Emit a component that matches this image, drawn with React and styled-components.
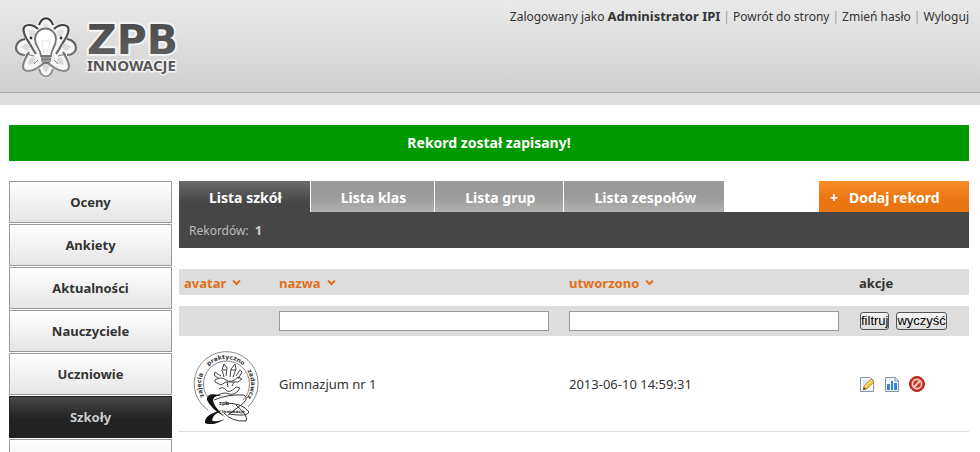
import React from "react";
import styled, { createGlobalStyle, css } from "styled-components";

const GlobalStyle = createGlobalStyle`
  * { box-sizing: border-box; }
  body {
    margin: 0;
    background: #fff;
    color: #333;
    font-family: "Lucida Grande", "Noto Sans", sans-serif;
    font-size: 13px;
    line-height: 16px;
  }
  a { color: inherit; text-decoration: none; }
`;

const Page = styled.div`
  height: 100vh;
  overflow: hidden;
`;

const Header = styled.header`
  display: flex;
  justify-content: space-between;
  align-items: flex-start;
  height: 105px;
  padding: 8px 11px 0 8px;
  background: linear-gradient(#e9e9e9, #d0d0d0 92px, #aaa 92px, #aaa 93px, #ddd 93px);
`;

const UserNav = styled.nav`
  font-size: 12px;
  color: #333;
  white-space: nowrap;
  strong { font-size: 13px; }
`;

const Divider = styled.span`
  margin: 0 3px;
  color: #999;
`;

const Notice = styled.div`
  margin: 20px 11px 20px 9px;
  padding: 10px;
  background: #090;
  color: #fff;
  font-size: 14px;
  font-weight: bold;
  text-align: center;
`;

const Body = styled.div`
  display: grid;
  grid-template-columns: 163px minmax(0, 1fr);
  gap: 7px;
  align-items: start;
  padding: 0 11px 0 9px;
`;

const Sidebar = styled.nav`
  display: flex;
  flex-direction: column;
  gap: 1px;
`;

const SideLink = styled.a`
  display: flex;
  align-items: center;
  justify-content: center;
  height: 42px;
  border: 1px solid #999;
  background: linear-gradient(#fff, #e5e5e5);
  font-weight: bold;
  ${({ $active }) => $active && css`
    border-color: #222;
    background: linear-gradient(#484848, #222 55%);
    color: #ccc;
  `}
`;

const Main = styled.main`
  min-width: 0;
`;

const Toolbar = styled.div`
  display: flex;
  justify-content: space-between;
`;

const Tabs = styled.nav`
  display: flex;
  gap: 1px;
`;

const Tab = styled.a`
  height: 31px;
  padding: 9px 28px 0 30px;
  background: ${({ $active }) =>
    $active ? "linear-gradient(#6a6a6a, #464646 70%)" : "linear-gradient(#999, #9c9c9c 55%, #b2b2b2)"};
  color: #fff;
  font-size: 14px;
  font-weight: bold;
  white-space: nowrap;
`;

const AddButton = styled.button`
  display: flex;
  align-items: center;
  gap: 11px;
  width: 150px;
  height: 31px;
  padding: 1px 0 0 11px;
  border: 0;
  background: linear-gradient(#fa9026, #ec7815 50%, #e8730f);
  color: #fff;
  font: bold 14px "Lucida Grande", "Noto Sans", sans-serif;
`;

const Summary = styled.div`
  padding: 10px;
  height: 36px;
  margin-bottom: 21px;
  background: #464646;
  color: #bbb;
  font-size: 12px;
  strong { margin-left: 3px; font-size: 13px; color: #ccc; }
`;

const Table = styled.table`
  width: 100%;
  table-layout: fixed;
  border-spacing: 0;
`;

const AvatarCol = styled.col`width: 95px;`;
const ActionCol = styled.col`width: 115px;`;

const HeadCell = styled.th`
  height: 26px;
  padding: 1px 5px 0;
  background: #ddd;
  text-align: left;
`;

const SortLink = styled.a`
  display: inline-flex;
  align-items: center;
  gap: 6px;
  color: #e07018;
`;

const FilterCell = styled.td`
  height: 41px;
  padding: 0 5px;
  border-top: 11px solid #fff;
  background: #ddd;
`;

const FilterInput = styled.input`
  display: block;
  width: calc(100% - 10px);
  height: 20px;
  padding: 0 3px;
  border: 1px solid #999;
  background: #fff;
`;

const FilterActions = styled.div`
  display: flex;
  gap: 7px;
  padding-left: 1px;
`;

const SmallButton = styled.button`
  height: 18px;
  padding: 0;
  border: 1px solid #555;
  border-radius: 3px;
  background: linear-gradient(#f6f6f6, #ddd);
  color: #000;
  font: 13px/16px "Liberation Sans", Arial, sans-serif;
`;

const Cell = styled.td`
  height: 96px;
  padding: 0 5px;
  border-bottom: 1px solid #ddd;
`;

const AvatarPicture = styled.svg`
  display: block;
  margin-left: 5px;
`;

const RowActions = styled.div`
  display: flex;
  gap: 9px;
`;

const IconButton = styled.button`
  display: flex;
  width: 16px;
  height: 16px;
  padding: 0;
  border: 0;
  background: none;
`;

const ORBITS = [0, 45, 90, 135];

function Logo() {
  return (
    <svg width="176" height="76" viewBox="8 8 176 76" role="img" aria-label="ZPB Innowacje">
      <defs>
        <linearGradient id="orbit" gradientUnits="userSpaceOnUse" x1="0" y1="-30" x2="0" y2="30">
          <stop offset="0" stopColor="#333" />
          <stop offset="0.5" stopColor="#666" />
          <stop offset="1" stopColor="#999" />
        </linearGradient>
        <linearGradient id="letters" x1="0" y1="0" x2="0" y2="1">
          <stop offset="0" stopColor="#484848" />
          <stop offset="1" stopColor="#636363" />
        </linearGradient>
      </defs>
      <g transform="translate(46 47)" fill="none">
        {ORBITS.map((a) => (
          <ellipse key={a} rx="28" ry="9" transform={`rotate(${a})`} stroke="#f6f6f6" strokeWidth="6" />
        ))}
        <g stroke="url(#orbit)" strokeWidth="2.200">
          <path d="M-7-22C-4-31 4-31 7-22M-7 22C-4 32 4 32 7 22" />
          <path d="M-21-8C-33-6-33 8-21 8M21-8C33-6 33 8 21 8" />
          <path d="M-16-3C-24-14-25-22-17-22Q-12-22-8-18M16-3C24-14 25-22 17-22Q12-22 8-18" />
          <path d="M-16-3Q-13 3-10 7M16-3Q13 3 10 7" />
          <path d="M-17 5C-25 18-25 24-17 24Q-9 23 0 14M17 5C25 18 25 24 17 24Q9 23 0 14" />
          <path d="M-20 7L-12 9M20 7L12 9M-12 17L-8 13M12 17L8 13" strokeWidth="1" />
        </g>
      </g>
      <path d="M41 56C41 49 35 47 35 39a10.500 10.500 0 0 1 21 0c0 8-5 10-5 17z" fill="#fff" stroke="#777" strokeWidth="1.800" />
      <path d="M44 54l-2-13 2-1 2 2 2-2 2 1-3 13" fill="none" stroke="#e4e4e4" />
      <path d="M41 56h10v5l-3 3h-4l-3-3z" fill="#777" />
      <path d="M41 58h10M41 61h10" stroke="#bbb" />
      <circle cx="31" cy="38" r="1.400" fill="#333" />
      <circle cx="61" cy="38" r="1.400" fill="#333" />
      <g fill="url(#letters)" stroke="#f4f4f4" strokeLinejoin="round" paintOrder="stroke">
        <text x="87" y="54" fontFamily="DejaVu Sans" fontWeight="bold" fontSize="41" strokeWidth="4">ZPB</text>
        <text x="87" y="71" fontFamily="Noto Sans" fontWeight="bold" fontSize="15" strokeWidth="3">INNOWACJE</text>
      </g>
    </svg>
  );
}

function SchoolAvatar() {
  return (
    <AvatarPicture width="80" height="80" viewBox="0 0 80 80" role="img" aria-label="Gimnazjum nr 1">
      <defs>
        <path id="ring" d="M17 55A25 25 0 1 1 57 55" />
      </defs>
      <g fill="none" stroke="#888">
        <path d="M19 66A32 32 0 1 1 59 63" />
        <path d="M22 57A23 23 0 1 1 54 56" />
      </g>
      <g fontFamily="DejaVu Sans" fontWeight="bold" fontSize="6" fill="#333">
        <text><textPath href="#ring" startOffset="3">zajęcia</textPath></text>
        <text><textPath href="#ring" startOffset="36">praktyczno</textPath></text>
        <text><textPath href="#ring" startOffset="80">zadawcze</textPath></text>
      </g>
      <g fill="none" stroke="#444" strokeWidth="1">
        <path d="M35 33l-2-7 2-6 3 4-1 8M41 33l1-8 4-5 1 5-3 8M32 32l-6-4-1 3 5 4M47 32l4-6 2 2-4 7M34 26h3M42 26h4" />
        <path d="M26 36q6-4 11 0t12-3l4 2-4 3H37l-5 3-6-3zM38 38l1 5M45 38l-2 4" />
        <path d="M30 45q4-3 7 1t10-3l4 1-3 4q-5 4-11 1-5 0-8 2" />
      </g>
      <g fill="none" stroke="#333" strokeWidth="1">
        <path d="M25 56Q39 50 55 51Q62 55 48 64L39 71" />
        <path d="M36 59Q54 59 60 68Q59 73 40 70" />
        <path d="M35 69Q43 78 57 77Q60 72 47 61" />
      </g>
      <path d="M34 52Q17 47 18 56Q22 65 36 73Q24 62 24 56Q25 51 34 52zM34 66Q15 70 16 79Q23 83 36 75Q24 79 23 76Q24 70 34 66z" fill="#111" />
      <g fontFamily="DejaVu Sans" fontWeight="bold" fill="#222">
        <text x="30" y="61" fontSize="5">zpb</text>
        <text x="33" y="69" fontSize="4">innowacje</text>
      </g>
    </AvatarPicture>
  );
}

function Chevron() {
  return (
    <svg width="9" height="7" viewBox="0 0 9 7" aria-hidden="true">
      <path d="M1 1.500L4.500 5L8 1.500" fill="none" stroke="#e07018" strokeWidth="2" />
    </svg>
  );
}

function PageShape() {
  return <path d="M1.500 1.500h10l3 3v11h-13z" fill="#f4f9ff" stroke="#8196aa" />;
}

function EditIcon() {
  return (
    <svg width="16" height="16" viewBox="0 0 16 16" aria-hidden="true">
      <PageShape />
      <path d="M4 5h6M4 7h5M4 9h3" stroke="#c5d2de" />
      <path d="M4 14l1-4 7-7 3 3-7 7z" fill="#f5c34d" stroke="#c08a2a" strokeWidth="0.8" />
      <path d="M6 11l7-7" stroke="#fff0a0" />
      <path d="M4 14l1-3 2 2z" fill="#444" />
    </svg>
  );
}

function ChartIcon() {
  return (
    <svg width="16" height="16" viewBox="0 0 16 16" aria-hidden="true">
      <PageShape />
      <path d="M11 1v4h4" fill="#d5e2ee" stroke="#8196aa" />
      <path d="M3 8h3v6H3zM7 5h2v9H7zM10 7h3v7h-3z" fill="#3b87d3" />
    </svg>
  );
}

function BlockIcon() {
  return (
    <svg width="16" height="16" viewBox="0 0 16 16" aria-hidden="true">
      <circle cx="8" cy="8" r="7.500" fill="#cf3326" stroke="#a32318" />
      <circle cx="8" cy="8" r="4.600" fill="none" stroke="#f5cfc8" strokeWidth="1.600" />
      <path d="M5 11l6-6" stroke="#f5cfc8" strokeWidth="1.800" />
    </svg>
  );
}

const SIDE = ["Oceny", "Ankiety", "Aktualności", "Nauczyciele", "Uczniowie", "Szkoły", ""];
const TABS = ["Lista szkół", "Lista klas", "Lista grup", "Lista zespołów"];
const COLUMNS = ["avatar", "nazwa", "utworzono"];
const ACTIONS = [
  ["Edytuj", EditIcon],
  ["Statystyki", ChartIcon],
  ["Zablokuj", BlockIcon],
];

export default function App() {
  return (
    <Page>
      <GlobalStyle />
      <Header>
        <Logo />
        <UserNav>
          Zalogowany jako <strong>Administrator IPI</strong>
          <Divider>|</Divider><a href="#strona">Powrót do strony</a>
          <Divider>|</Divider><a href="#haslo">Zmień hasło</a>
          <Divider>|</Divider><a href="#wyloguj">Wyloguj</a>
        </UserNav>
      </Header>
      <Notice role="status">Rekord został zapisany!</Notice>
      <Body>
        <Sidebar>
          {SIDE.map((label) => (
            <SideLink key={label} href="#menu" $active={label === "Szkoły"}>{label}</SideLink>
          ))}
        </Sidebar>
        <Main>
          <Toolbar>
            <Tabs>
              {TABS.map((label, i) => (
                <Tab key={label} href="#lista" $active={i === 0}>{label}</Tab>
              ))}
            </Tabs>
            <AddButton type="button"><span>+</span><span>Dodaj rekord</span></AddButton>
          </Toolbar>
          <Summary>Rekordów: <strong>1</strong></Summary>
          <Table>
            <colgroup>
              <AvatarCol /><col /><col /><ActionCol />
            </colgroup>
            <thead>
              <tr>
                {COLUMNS.map((label) => (
                  <HeadCell key={label} scope="col">
                    <SortLink href="#sortuj">{label}<Chevron /></SortLink>
                  </HeadCell>
                ))}
                <HeadCell scope="col">akcje</HeadCell>
              </tr>
            </thead>
            <tbody>
              <tr>
                <FilterCell />
                <FilterCell><FilterInput type="text" aria-label="nazwa" /></FilterCell>
                <FilterCell><FilterInput type="text" aria-label="utworzono" /></FilterCell>
                <FilterCell>
                  <FilterActions>
                    <SmallButton type="button">filtruj</SmallButton>
                    <SmallButton type="button">wyczyść</SmallButton>
                  </FilterActions>
                </FilterCell>
              </tr>
              <tr>
                <Cell><SchoolAvatar /></Cell>
                <Cell>Gimnazjum nr 1</Cell>
                <Cell>2013-06-10 14:59:31</Cell>
                <Cell>
                  <RowActions>
                    {ACTIONS.map(([label, Icon]) => (
                      <IconButton key={label} type="button" aria-label={label}><Icon /></IconButton>
                    ))}
                  </RowActions>
                </Cell>
              </tr>
            </tbody>
          </Table>
        </Main>
      </Body>
    </Page>
  );
}
